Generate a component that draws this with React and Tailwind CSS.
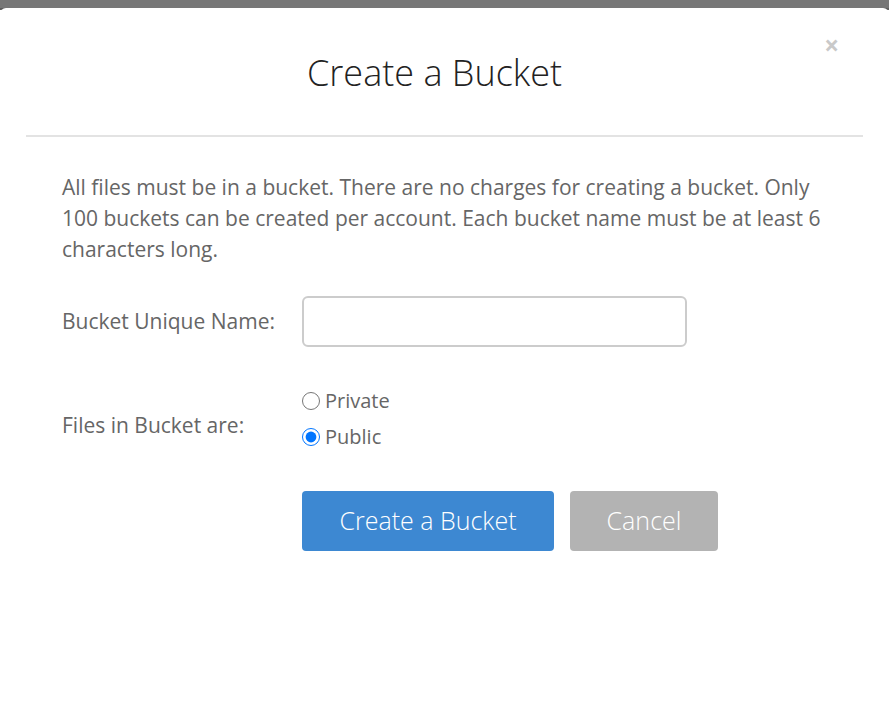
export default function App() {
  return (
    <div className="min-h-[702px] bg-white font-['Open_Sans',sans-serif]">
      {/* page behind the modal */}
      <div className="h-[8px] bg-[#777777]" />
      <div className="h-[2px] bg-[#5f5f5f]" />

      {/* modal */}
      <div className="relative -mt-[2px] rounded-t-md bg-white pb-[150px]">
        <button className="absolute right-[50px] top-[24px] text-[26px] font-bold leading-none text-[#c9c9c9]">
          ×
        </button>

        <div className="pt-[41px] pb-[38px] pr-[20px] text-center">
          <h1 className="text-[36px] font-light leading-[48px] text-[#222222]">Create a Bucket</h1>
        </div>
        <div className="mx-[26px] h-[2px] bg-[#e3e3e3]" />

        <div className="px-[62px] pt-[35px]">
          <p className="text-[21px] leading-[31px] text-[#666666]">
            All files must be in a bucket. There are no charges for creating a bucket. Only 100 buckets can be
            created per account. Each bucket name must be at least 6 characters long.
          </p>

          <div className="mt-[31px] grid grid-cols-[240px_385px] items-center">
            <label className="text-[21px] text-[#666666]">Bucket Unique Name:</label>
            <input
              type="text"
              className="h-[51px] rounded-md border-2 border-[#cccccc] px-3 text-[20px] outline-none"
            />
          </div>

          <div className="mt-[40px] grid grid-cols-[240px_385px] items-center">
            <label className="mt-[14px] text-[21px] text-[#666666]">Files in Bucket are:</label>
            <div className="flex flex-col gap-[9px]">
              <label className="flex items-center gap-[5px] text-[20px] leading-[27px] text-[#666666]">
                <input type="radio" name="vis" className="m-0 h-[18px] w-[18px]" />
                Private
              </label>
              <label className="flex items-center gap-[5px] text-[20px] leading-[27px] text-[#666666]">
                <input type="radio" name="vis" defaultChecked className="m-0 h-[18px] w-[18px]" />
                Public
              </label>
            </div>
          </div>

          <div className="mt-[41px] ml-[240px] flex gap-[16px]">
            <button className="h-[60px] w-[252px] rounded bg-[#3d88d2] text-[25px] font-light text-white">
              Create a Bucket
            </button>
            <button className="h-[60px] w-[148px] rounded bg-[#b3b3b3] text-[25px] font-light text-white">
              Cancel
            </button>
          </div>
        </div>
      </div>
    </div>
  );
}
